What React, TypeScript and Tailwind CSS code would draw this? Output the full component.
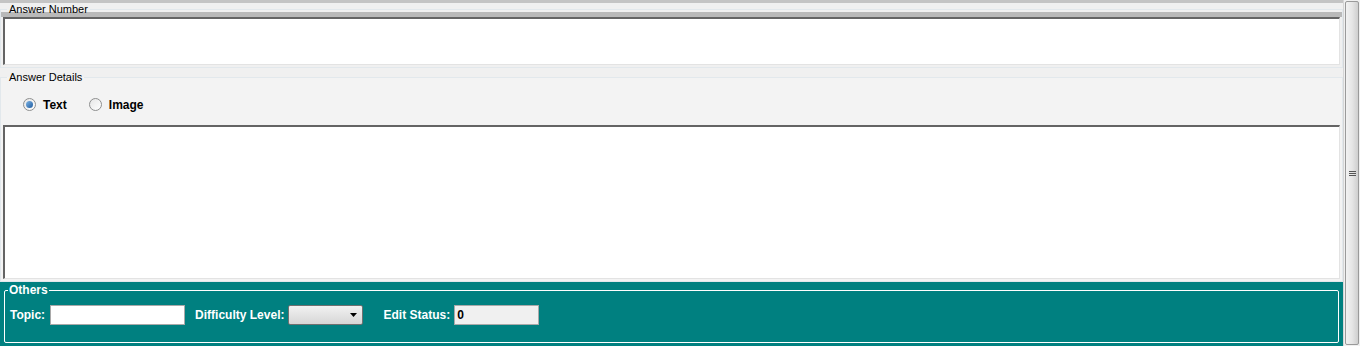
import React from "react";

const font = { fontFamily: "'Liberation Sans', Arial, sans-serif" };

const Radio: React.FC<{ checked?: boolean; label: string }> = ({ checked, label }) => (
  <label className="flex items-center gap-[7px] text-[12px] font-bold text-black">
    <span className="flex h-[13px] w-[13px] items-center justify-center rounded-full border border-[#8e8f8f] bg-gradient-to-br from-[#e6e6e6] to-[#ffffff]">
      {checked ? <span className="h-[7px] w-[7px] rounded-full bg-gradient-to-br from-[#7fb6e6] to-[#1c5b9f]"></span> : null}
    </span>
    {label}
  </label>
);

const Scrollbar: React.FC = () => (
  <div className="flex w-[17px] shrink-0 flex-col border-l border-[#d6d6d6] bg-[#f0f0f0] p-px">
    <div className="flex flex-1 items-center justify-center rounded-[2px] border border-[#9a9a9a] bg-gradient-to-r from-[#f2f2f2] via-[#e6e6e6] to-[#cfcfcf]">
      <div className="flex flex-col gap-px">
        <span className="h-px w-[7px] bg-[#555]"></span>
        <span className="h-px w-[7px] bg-[#555]"></span>
        <span className="h-px w-[7px] bg-[#555]"></span>
      </div>
    </div>
  </div>
);

const inset =
  "border-t-2 border-l-2 border-t-[#646464] border-l-[#646464] border-r border-b border-r-[#e3e3e3] border-b-[#e3e3e3] bg-white";

export default function App() {
  return (
    <div className="flex h-[346px] w-[1360px] overflow-hidden bg-[#dcdcdc]" style={font}>
      <div className="flex w-[1343px] flex-col bg-[#f0f0f0]">
        <div className="h-[3px] bg-[#c4c4c4]"></div>

        {/* Answer Number */}
        <fieldset className="border border-[#e2e8ec] bg-[#f0f0f0] px-[2px] pb-[2px]">
          <legend className="ml-[4px] px-[2px] text-[11px] leading-[12px] text-black">Answer Number</legend>
          <div className="-mx-[2px] -mt-[3px] h-[5px] bg-[#b9b9b9]"></div>
          <div className={`h-[48px] ${inset}`}></div>
        </fieldset>

        {/* Answer Details */}
        <fieldset className="mt-[2px] border border-[#e2e8ec] bg-[#f3f3f3] px-[2px] pb-[2px]">
          <legend className="ml-[4px] px-[2px] text-[11px] leading-[14px] text-black">Answer Details</legend>
          <div className="flex h-[41px] items-center gap-[22px] pl-[20px]">
            <Radio checked label="Text" />
            <Radio label="Image" />
          </div>
          <div className={`h-[154px] ${inset}`}></div>
        </fieldset>

        {/* Others */}
        <div className="flex-1 bg-[#008080] px-[4px] pt-[2px] pb-[3px]">
          <fieldset className="h-full rounded-[2px] border border-white px-[5px]">
            <legend className="-ml-[2px] px-[1px] text-[12px] font-bold leading-[12px] text-white">Others</legend>
            <div className="mt-[9px] flex items-center text-[12px] font-bold text-white">
              <span className="mr-[5px]">Topic:</span>
              <div className="h-[20px] w-[135px] border border-[#a9a9a9] bg-white"></div>
              <span className="ml-[10px] mr-[4px]">Difficulty Level:</span>
              <div className="flex h-[20px] w-[75px] items-center justify-end rounded-[2px] border border-[#707070] bg-gradient-to-b from-[#f2f2f2] to-[#d6d6d6] pr-[5px]">
                <svg width="7" height="4" viewBox="0 0 7 4">
                  <path d="M0 0h7L3.5 4z" fill="#000" />
                </svg>
              </div>
              <span className="ml-[20px] mr-[4px]">Edit Status:</span>
              <div className="flex h-[20px] w-[85px] items-center border border-[#a9a9a9] bg-[#f0f0f0] pl-[2px] text-[12px] text-black">0</div>
            </div>
          </fieldset>
        </div>
      </div>
      <Scrollbar />
    </div>
  );
}
